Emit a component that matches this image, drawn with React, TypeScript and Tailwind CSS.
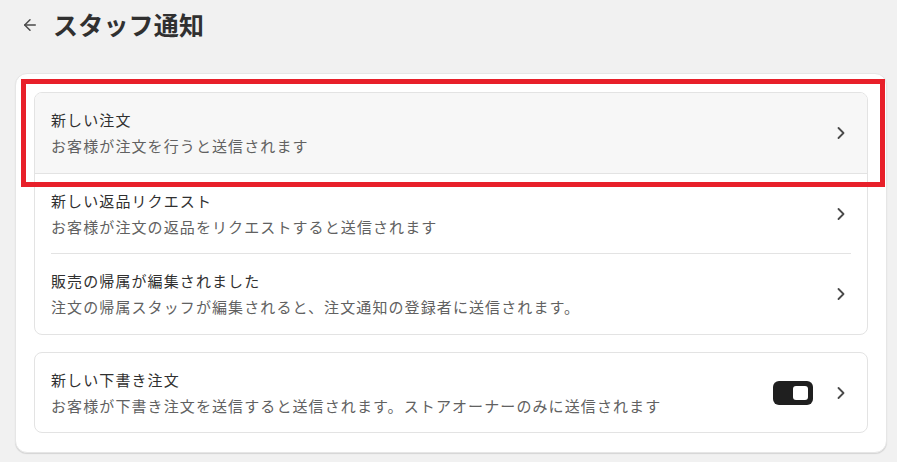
import { ChevronRight, ArrowLeft } from "lucide-react";

const jp = { fontFamily: '"Noto Sans CJK JP", "Noto Sans", sans-serif' };

const rows = [
  { title: "新しい注文", desc: "お客様が注文を行うと送信されます", active: true },
  { title: "新しい返品リクエスト", desc: "お客様が注文の返品をリクエストすると送信されます" },
  { title: "販売の帰属が編集されました", desc: "注文の帰属スタッフが編集されると、注文通知の登録者に送信されます。" },
];

function Row({ title, desc, active, last }: { title: string; desc: string; active?: boolean; last?: boolean }) {
  return (
    <div className={active ? "bg-[#f7f7f7] border-b border-[#e3e3e3]" : ""}>
      <div className={`mx-4 flex items-center h-[80px] ${!active && !last ? "border-b border-[#e3e3e3]" : ""}`}>
        <div className="flex-1 flex flex-col gap-[2px]">
          <div className="text-[15px] leading-[24px] text-[#303030] tracking-[1.1px]">{title}</div>
          <div className="text-[15px] leading-[24px] text-[#616161] tracking-[1.1px]">{desc}</div>
        </div>
        <ChevronRight className="w-5 h-5 text-[#4a4a4a]" strokeWidth={2.2} />
      </div>
    </div>
  );
}

export default function App() {
  return (
    <div className="w-[897px] h-[462px] bg-[#f1f1f1] relative overflow-hidden" style={jp}>
      <div className="flex items-center h-[49px] pl-[21px] gap-[14px]">
        <ArrowLeft className="w-[18px] h-[18px] text-[#4a4a4a]" strokeWidth={2} />
        <h1 className="text-[25px] font-bold text-[#303030] leading-none tracking-[0.2px]">スタッフ通知</h1>
      </div>
      <div className="ml-[15px] mr-[10px] mt-[24px] bg-white rounded-xl border border-[#e6e6e6] shadow-[0_1px_1px_rgba(0,0,0,0.12)] px-[18px] pt-[18px] pb-[19px] flex flex-col gap-[17px]">
        <div className="rounded-lg border border-[#e3e3e3] overflow-hidden">
          {rows.map((r, i) => (
            <Row key={r.title} {...r} last={i === rows.length - 1} />
          ))}
        </div>
        <div className="rounded-lg border border-[#e3e3e3] h-[81px] px-4 flex items-center">
          <div className="flex-1 flex flex-col gap-[2px]">
            <div className="text-[15px] leading-[24px] text-[#303030] tracking-[1.1px]">新しい下書き注文</div>
            <div className="text-[15px] leading-[24px] text-[#616161] tracking-[1.1px]">
              お客様が下書き注文を送信すると送信されます。ストアオーナーのみに送信されます
            </div>
          </div>
          <div className="w-10 h-6 rounded-md bg-[#1f1f1f] flex items-center justify-end pr-[5px] mr-[18px]">
            <div className="w-[15px] h-[14px] rounded-[3px] bg-white" />
          </div>
          <ChevronRight className="w-5 h-5 text-[#4a4a4a]" strokeWidth={2.2} />
        </div>
      </div>
      <div className="absolute left-[21px] top-[79px] w-[864px] h-[108px] border-[5px] border-[#e8202a] pointer-events-none" />
    </div>
  );
}
